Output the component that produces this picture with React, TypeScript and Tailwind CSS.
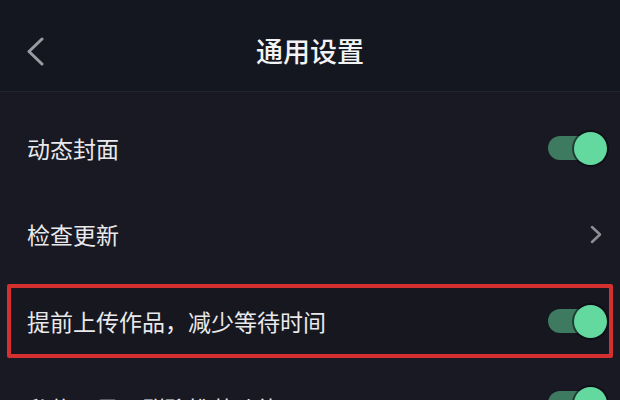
import React from "react";

const Toggle = () => (
  <div className="relative w-[59px] h-[33px] shrink-0">
    <div className="absolute left-0 top-[4px] w-[48px] h-[24px] rounded-full bg-[#3e7a60]" />
    <div className="absolute right-0 top-0 w-[33px] h-[33px] rounded-full bg-[#63d89f] shadow-[0_0_0_2px_rgba(8,10,16,0.55)]" />
  </div>
);

const Row = ({ label, right }: { label: string; right: React.ReactNode }) => (
  <div className="h-[86px] flex items-center justify-between pl-[27px] pr-[13px]">
    <span className="text-[23px] leading-none text-[#e9e9ec]">{label}</span>
    {right}
  </div>
);

export default function App() {
  return (
    <div
      className="w-[620px] h-[400px] overflow-hidden bg-[#181923]"
      style={{ fontFamily: '"Noto Sans CJK SC", "Noto Sans", sans-serif' }}
    >
      <div className="relative h-[92px] pt-[10px] flex items-center justify-center bg-[#141720] border-b border-[#23252e]">
        <svg
          className="absolute left-[25px] top-[37px]"
          width="22"
          height="29"
          viewBox="0 0 22 29"
          fill="none"
        >
          <path d="M17 2 L4 14.5 L17 27" stroke="#9b9ca3" strokeWidth="3" strokeLinecap="round" strokeLinejoin="round" />
        </svg>
        <span className="text-[27px] leading-none font-medium text-[#f3f3f5]">通用设置</span>
      </div>
      <div className="pt-[13px]">
        <Row label="动态封面" right={<Toggle />} />
        <Row
          label="检查更新"
          right={
            <svg className="mr-[4px]" width="14" height="19" viewBox="0 0 14 19" fill="none">
              <path d="M3 2 L11 9.5 L3 17" stroke="#8e8f96" strokeWidth="2.5" strokeLinecap="round" strokeLinejoin="round" />
            </svg>
          }
        />
        <div className="h-[86px] pt-[7px] pb-[5px] px-[7px]">
          <div className="h-full border-[4px] border-[#d3302f] rounded-[2px] flex items-center justify-between pl-[16px] pr-[2px] bg-[#16171f]">
            <span className="text-[23px] leading-none text-[#e9e9ec]">提前上传作品，减少等待时间</span>
            <Toggle />
          </div>
        </div>
        <div className="h-[86px] flex items-start justify-between pl-[27px] pr-[13px] pt-[24px]">
          <span className="text-[23px] leading-none text-[#e9e9ec] mt-[10px]">私信页显示群聊推荐功能</span>
          <Toggle />
        </div>
      </div>
    </div>
  );
}
